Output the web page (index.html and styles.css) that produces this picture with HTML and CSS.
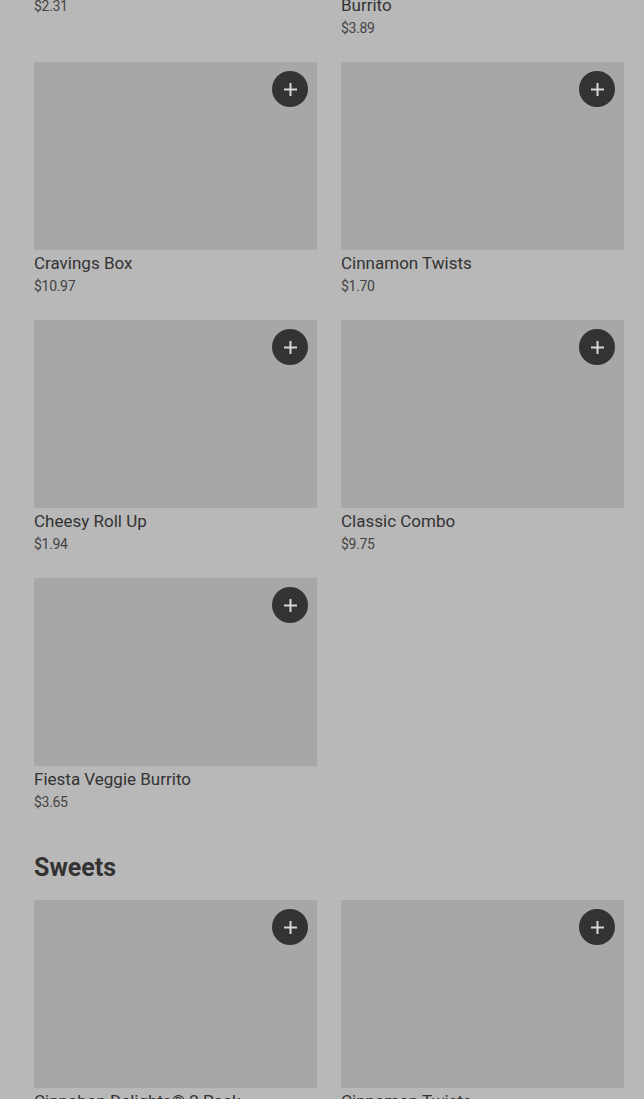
FILE: index.html
```html
<!DOCTYPE html>
<html>
<head>
<meta charset="utf-8">
<link rel="stylesheet" href="styles.css">
</head>
<body>
<main class="menu">
  <section class="section section-first">
    <div class="grid">
      <div class="card"><div class="thumb"><button class="add" aria-label="Add"><svg viewBox="0 0 14 14" width="13" height="13"><path d="M7 0v14M0 7h14" stroke="currentColor" stroke-width="2.2"/></svg></button></div><div class="title">Cheesy Bean and Rice Burrito</div><div class="price">$2.31</div></div>
      <div class="card"><div class="thumb"><button class="add" aria-label="Add"><svg viewBox="0 0 14 14" width="13" height="13"><path d="M7 0v14M0 7h14" stroke="currentColor" stroke-width="2.2"/></svg></button></div><div class="title">Chicken Enchilada Grilled Stuft Burrito</div><div class="price">$3.89</div></div>
      <div class="card"><div class="thumb"><button class="add" aria-label="Add"><svg viewBox="0 0 14 14" width="13" height="13"><path d="M7 0v14M0 7h14" stroke="currentColor" stroke-width="2.2"/></svg></button></div><div class="title">Cravings Box</div><div class="price">$10.97</div></div>
      <div class="card"><div class="thumb"><button class="add" aria-label="Add"><svg viewBox="0 0 14 14" width="13" height="13"><path d="M7 0v14M0 7h14" stroke="currentColor" stroke-width="2.2"/></svg></button></div><div class="title">Cinnamon Twists</div><div class="price">$1.70</div></div>
      <div class="card"><div class="thumb"><button class="add" aria-label="Add"><svg viewBox="0 0 14 14" width="13" height="13"><path d="M7 0v14M0 7h14" stroke="currentColor" stroke-width="2.2"/></svg></button></div><div class="title">Cheesy Roll Up</div><div class="price">$1.94</div></div>
      <div class="card"><div class="thumb"><button class="add" aria-label="Add"><svg viewBox="0 0 14 14" width="13" height="13"><path d="M7 0v14M0 7h14" stroke="currentColor" stroke-width="2.2"/></svg></button></div><div class="title">Classic Combo</div><div class="price">$9.75</div></div>
      <div class="card"><div class="thumb"><button class="add" aria-label="Add"><svg viewBox="0 0 14 14" width="13" height="13"><path d="M7 0v14M0 7h14" stroke="currentColor" stroke-width="2.2"/></svg></button></div><div class="title">Fiesta Veggie Burrito</div><div class="price">$3.65</div></div>
    </div>
  </section>
  <section class="section">
    <h2 class="heading">Sweets</h2>
    <div class="grid">
      <div class="card"><div class="thumb"><button class="add" aria-label="Add"><svg viewBox="0 0 14 14" width="13" height="13"><path d="M7 0v14M0 7h14" stroke="currentColor" stroke-width="2.2"/></svg></button></div><div class="title">Cinnabon Delights® 2 Pack</div><div class="price">$2.49</div></div>
      <div class="card"><div class="thumb"><button class="add" aria-label="Add"><svg viewBox="0 0 14 14" width="13" height="13"><path d="M7 0v14M0 7h14" stroke="currentColor" stroke-width="2.2"/></svg></button></div><div class="title">Cinnamon Twists</div><div class="price">$1.70</div></div>
    </div>
  </section>
</main>
</body>
</html>
```
FILE: styles.css
```css
* { box-sizing: border-box; }
html, body { margin: 0; padding: 0; }
body {
  background: #b8b8b8;
  font-family: Roboto, "Liberation Sans", sans-serif;
  color: #2e2e2e;
  overflow: hidden;
}
.menu {
  padding: 0 20px 0 34px;
}
.section-first {
  margin-top: -218px;
}
.section + .section {
  margin-top: 41px;
}
.heading {
  margin: 0 0 16px;
  font-size: 25px;
  line-height: 32px;
  font-weight: 700;
  color: #333;
}
.grid {
  display: grid;
  grid-template-columns: 283px 283px;
  column-gap: 24px;
  row-gap: 25px;
}
.card {
  display: flex;
  flex-direction: column;
}
.thumb {
  position: relative;
  height: 188px;
  background: #a7a7a7;
}
.add {
  position: absolute;
  top: 9px;
  right: 9px;
  width: 36px;
  height: 36px;
  border: 0;
  padding: 0;
  border-radius: 50%;
  background: #333;
  color: #d6d6d6;
  display: flex;
  align-items: center;
  justify-content: center;
}
.title {
  margin-top: 2px;
  font-size: 17px;
  line-height: 22px;
  font-weight: 400;
  color: #333;
}
.price {
  margin-top: 3px;
  font-size: 14px;
  line-height: 18px;
  color: #444;
  letter-spacing: -0.3px;
}
```
